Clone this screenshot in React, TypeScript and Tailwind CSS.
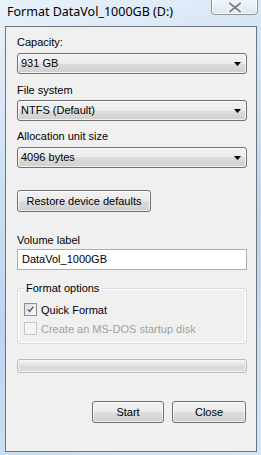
import React from "react";

const FONT = { fontFamily: '"Liberation Sans", Arial, sans-serif' };
const TITLE_FONT = { fontFamily: '"Noto Sans", "Open Sans", Arial, sans-serif' };

function Arrow() {
  return (
    <svg width="7" height="4" viewBox="0 0 7 4" className="block">
      <path d="M0 0 H7 L3.5 4 Z" fill="#000" />
    </svg>
  );
}

function Combo({ value }: { value: string }) {
  return (
    <div className="h-[21px] w-[230px] rounded-[3px] border border-[#707070] bg-[linear-gradient(#f2f2f2_0%,#ebebeb_50%,#dddddd_50%,#cfcfcf_100%)] flex items-center justify-between pl-[3px] pr-[5px] text-[11px] text-black shadow-[inset_0_0_0_1px_rgba(255,255,255,0.7)]">
      <span>{value}</span>
      <Arrow />
    </div>
  );
}

function Btn({ label, w }: { label: string; w: string }) {
  return (
    <div
      className={`${w} h-[22px] rounded-[3px] border border-[#707070] bg-[linear-gradient(#f2f2f2_0%,#ebebeb_50%,#dddddd_50%,#cfcfcf_100%)] flex items-center justify-center text-[11px] text-black shadow-[inset_0_0_0_1px_rgba(255,255,255,0.7)]`}
    >
      {label}
    </div>
  );
}

export default function App() {
  return (
    <div
      className="relative w-[261px] h-[455px] overflow-hidden bg-[linear-gradient(160deg,#e9f2fb_0%,#cfe1f3_30%,#bcd5ee_60%,#d5e5f5_100%)]"
      style={FONT}
    >
      {/* title bar */}
      <div className="flex h-[26px] items-start">
        <div className="pl-[7px] pt-[4px] text-[12.5px] text-black leading-[16px]" style={TITLE_FONT}>
          Format DataVol_1000GB (D:)
        </div>
      </div>
      {/* close button */}
      <div className="absolute left-[211px] top-[-3px] w-[47px] h-[18px] rounded-b-[4px] border border-[#8a949e] bg-[linear-gradient(#f4f7fa,#dde6ef)] flex items-center justify-center shadow-[inset_0_0_0_1px_rgba(255,255,255,0.8)]">
        <svg width="14" height="11" viewBox="0 0 14 11" className="mt-[3px]">
          <path d="M2 1.5 L12 9.5 M12 1.5 L2 9.5" stroke="#fff" strokeWidth="4.2" strokeLinecap="round" />
          <path d="M2 1.5 L12 9.5 M12 1.5 L2 9.5" stroke="#7b828a" strokeWidth="2.2" strokeLinecap="round" />
        </svg>
      </div>

      {/* client area */}
      <div className="ml-[5px] w-[252px] h-[426px] border border-[#6f757c] bg-[#f0f0f0] pl-[11px] pt-[7px] text-[11px] text-black">
        <div className="h-[16px] leading-[16px]">Capacity:</div>
        <div className="mt-[3px]"><Combo value="931 GB" /></div>
        <div className="mt-[8px] h-[16px] leading-[16px]">File system</div>
        <div className="mt-[2px]"><Combo value="NTFS (Default)" /></div>
        <div className="mt-[7px] h-[16px] leading-[16px]">Allocation unit size</div>
        <div className="mt-[3px]"><Combo value="4096 bytes" /></div>
        <div className="mt-[22px]"><Btn label="Restore device defaults" w="w-[134px]" /></div>
        <div className="mt-[20px] h-[16px] leading-[16px]">Volume label</div>
        <div className="mt-[1px] h-[21px] w-[230px] border border-[#abadb3] bg-white flex items-center pl-[4px]">
          DataVol_1000GB
        </div>

        {/* group box */}
        <div className="relative mt-[18px] h-[56px] w-[230px] rounded-[3px] border border-[#d5dfe5] shadow-[inset_0_0_0_1px_#fff]">
          <div className="absolute left-[6px] top-[-9px] bg-[#f0f0f0] px-[2px] leading-[16px]">Format options</div>
          <div className="pl-[6px] pt-[14px] flex flex-col gap-[6px]">
            <div className="flex items-center gap-[4px] h-[13px]">
              <div className="w-[13px] h-[13px] border border-[#8e8f8f] bg-[linear-gradient(135deg,#dcdcdc,#fbfbfb)] flex items-center justify-center p-[2px]">
                <div className="w-full h-full bg-[linear-gradient(135deg,#e2e2e2,#f8f8f8)] flex items-center justify-center">
                  <svg width="9" height="9" viewBox="0 0 9 9">
                    <path d="M1 4.5 L3.5 7 L8 1" fill="none" stroke="#4a5f97" strokeWidth="1.8" />
                  </svg>
                </div>
              </div>
              <span className="leading-[16px]">Quick Format</span>
            </div>
            <div className="flex items-center gap-[4px] h-[13px]">
              <div className="w-[13px] h-[13px] border border-[#c6c6c6] bg-[#f4f4f4]" />
              <span className="leading-[16px] text-[#a0a0a0]">Create an MS-DOS startup disk</span>
            </div>
          </div>
        </div>

        {/* progress bar */}
        <div className="mt-[15px] h-[14px] w-[230px] rounded-[3px] border border-[#bcbcbc] bg-[linear-gradient(#f3f3f3_0%,#e4e4e4_40%,#d8d8d8_60%,#e2e2e2_100%)] shadow-[inset_0_0_0_1px_rgba(255,255,255,0.6)]" />

        {/* buttons */}
        <div className="mt-[28px] flex gap-[8px] pl-[75px]">
          <Btn label="Start" w="w-[72px]" />
          <Btn label="Close" w="w-[74px]" />
        </div>
      </div>
    </div>
  );
}
